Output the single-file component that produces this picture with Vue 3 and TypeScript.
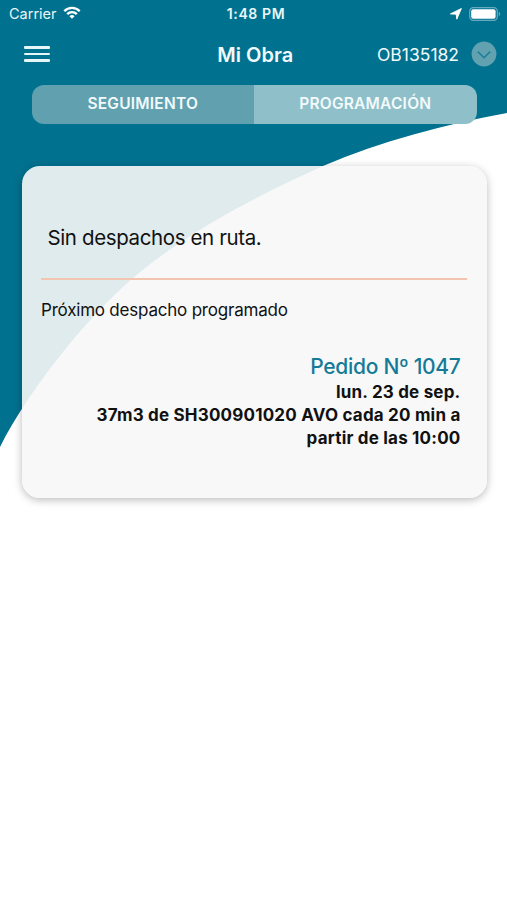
<script setup lang="ts">
import { ref } from 'vue'

const tabs: string[] = ['SEGUIMIENTO', 'PROGRAMACIÓN']
const active = ref(0)
const site = 'OB135182'
const order = {
  title: 'Pedido Nº 1047',
  date: 'lun. 23 de sep.',
  lines: ['37m3 de SH300901020 AVO cada 20 min a', 'partir de las 10:00'],
}
</script>

<template>
  <div class="screen">
    <svg class="backdrop" width="507" height="900" viewBox="0 0 507 900" aria-hidden="true">
      <path
        d="M0 0H507V113C445 124.5 381 141 323 166C261 194 188 231 133 278C87 317 28 391 0 447Z"
        fill="#00718f"
      />
    </svg>

    <div class="status">
      <div class="carrier">
        <span>Carrier</span>
        <svg width="18" height="14" viewBox="0 0 18 14" fill="none" stroke="#fff" stroke-width="2.3">
          <path d="M1.3 5.2C5.5 .8 12.5 .8 16.7 5.2" />
          <path d="M4.2 8.1C6.8 5.4 11.2 5.4 13.8 8.1" />
          <path d="M9 12.8 6.4 10.2C7.8 8.7 10.2 8.7 11.6 10.2Z" fill="#fff" stroke="none" />
        </svg>
      </div>
      <span class="clock">1:48 PM</span>
      <div class="power">
        <svg width="12" height="12" viewBox="0 0 12 12">
          <path d="M11.4 .5 6.8 11.2 6.2 6.2 .4 5.9Z" fill="#fff" stroke="#fff" stroke-width=".9" stroke-linejoin="round" />
        </svg>
        <svg width="32" height="14" viewBox="0 0 32 14">
          <rect x=".7" y=".7" width="27.6" height="12.6" rx="3.6" fill="none" stroke="#68aabd" stroke-width="1.2" />
          <rect x="2.2" y="2.2" width="24.4" height="9.6" rx="2" fill="#fff" />
          <path d="M29.8 4.8C31.7 5.6 31.7 8.4 29.8 9.2Z" fill="#68aabd" />
        </svg>
      </div>
    </div>

    <header class="navbar">
      <button class="menu" aria-label="Menú"><i></i><i></i><i></i></button>
      <h1>Mi Obra</h1>
      <button class="site">
        <span>{{ site }}</span>
        <svg width="26" height="26" viewBox="0 0 26 26">
          <circle cx="13" cy="13" r="12.4" fill="#61a1b0" />
          <path d="M6.8 10.6 13 16.7 19.2 10.6" fill="none" stroke="#1c8097" stroke-width="1.6" />
        </svg>
      </button>
    </header>

    <nav class="tabs">
      <button
        v-for="(tab, i) in tabs"
        :key="tab"
        class="tab"
        :class="{ active: active === i }"
        @click="active = i"
      >
        {{ tab }}
      </button>
    </nav>

    <main class="card">
      <h2>Sin despachos en ruta.</h2>
      <p class="next">Próximo despacho programado</p>
      <section class="order">
        <h3>{{ order.title }}</h3>
        <p>{{ order.date }}</p>
        <p v-for="line in order.lines" :key="line">{{ line }}</p>
      </section>
    </main>
  </div>
</template>

<style>
body {
  background: #fff;
}
</style>

<style scoped>
.screen {
  position: relative;
  box-sizing: border-box;
  width: 507px;
  height: 900px;
  overflow: hidden;
  background: #fff;
  font-family: Inter, "Liberation Sans", sans-serif;
  color: #111;
}
.backdrop {
  position: absolute;
  inset: 0;
}
.status,
.navbar,
.tabs,
.card {
  position: relative;
}
h1,
h2,
h3,
p {
  margin: 0;
  white-space: nowrap;
}
button {
  padding: 0;
  border: 0;
  background: none;
  font: inherit;
  color: inherit;
}
.status {
  box-sizing: border-box;
  display: grid;
  grid-template-columns: 1fr auto 1fr;
  align-items: center;
  height: 28px;
  padding: 0 6px 1px 9px;
  color: #e9f6f9;
}
.carrier {
  display: flex;
  align-items: center;
  gap: 6px;
  font-size: 14.5px;
}
.carrier svg {
  margin-top: -1px;
}
.clock {
  padding-left: 2px;
  font-size: 14px;
  font-weight: 600;
  letter-spacing: 0.6px;
}
.power {
  display: flex;
  justify-content: flex-end;
  align-items: center;
  gap: 7px;
}
.navbar {
  display: grid;
  grid-template-columns: 1fr auto 1fr;
  align-items: center;
  height: 52px;
  padding: 0 10px 0 13.5px;
  color: #f1fafc;
}
.menu {
  display: flex;
  flex-direction: column;
  gap: 4px;
  width: 26px;
  margin-left: 10.5px;
}
.menu i {
  height: 2.4px;
  border-radius: 1px;
  background: #e6f6f9;
}
h1 {
  padding-top: 1px;
  font-size: 20px;
  font-weight: 600;
}
.site {
  display: flex;
  justify-content: flex-end;
  align-items: center;
  gap: 12px;
  font-size: 17.5px;
}
.tabs {
  display: grid;
  grid-template-columns: 1fr 1fr;
  width: 445px;
  height: 39px;
  margin: 5px 0 0 31.5px;
  border-radius: 12px;
  overflow: hidden;
}
.tab {
  padding-bottom: 3px;
  background: #8fbfc9;
  color: #f2fafc;
  font-size: 15.5px;
  font-weight: 600;
  letter-spacing: 0.22px;
}
.tab.active {
  background: #61a1af;
}
.card {
  box-sizing: border-box;
  width: 465px;
  height: 332px;
  margin: 41.5px 0 0 21.5px;
  padding: 55px 20px 0 19.5px;
  border-radius: 18px;
  background: rgba(247, 247, 247, 0.905);
  box-shadow: 0 2px 9px rgba(0, 0, 0, 0.27);
}
h2 {
  height: 57px;
  padding-left: 6.5px;
  border-bottom: 2px solid #f3c4ae;
  font-size: 20.5px;
  font-weight: 400;
  letter-spacing: -0.38px;
  line-height: 33px;
}
.next {
  margin-top: 18px;
  font-size: 17px;
  letter-spacing: -0.21px;
  line-height: 24px;
}
.order {
  margin-top: 31.5px;
  padding-right: 6px;
  text-align: right;
  font-size: 17px;
  font-weight: 700;
  letter-spacing: 0.2px;
  line-height: 23.2px;
}
h3 {
  margin-bottom: 1px;
  color: #137b97;
  font-size: 21px;
  font-weight: 500;
  letter-spacing: -0.3px;
  line-height: 27px;
}
</style>
